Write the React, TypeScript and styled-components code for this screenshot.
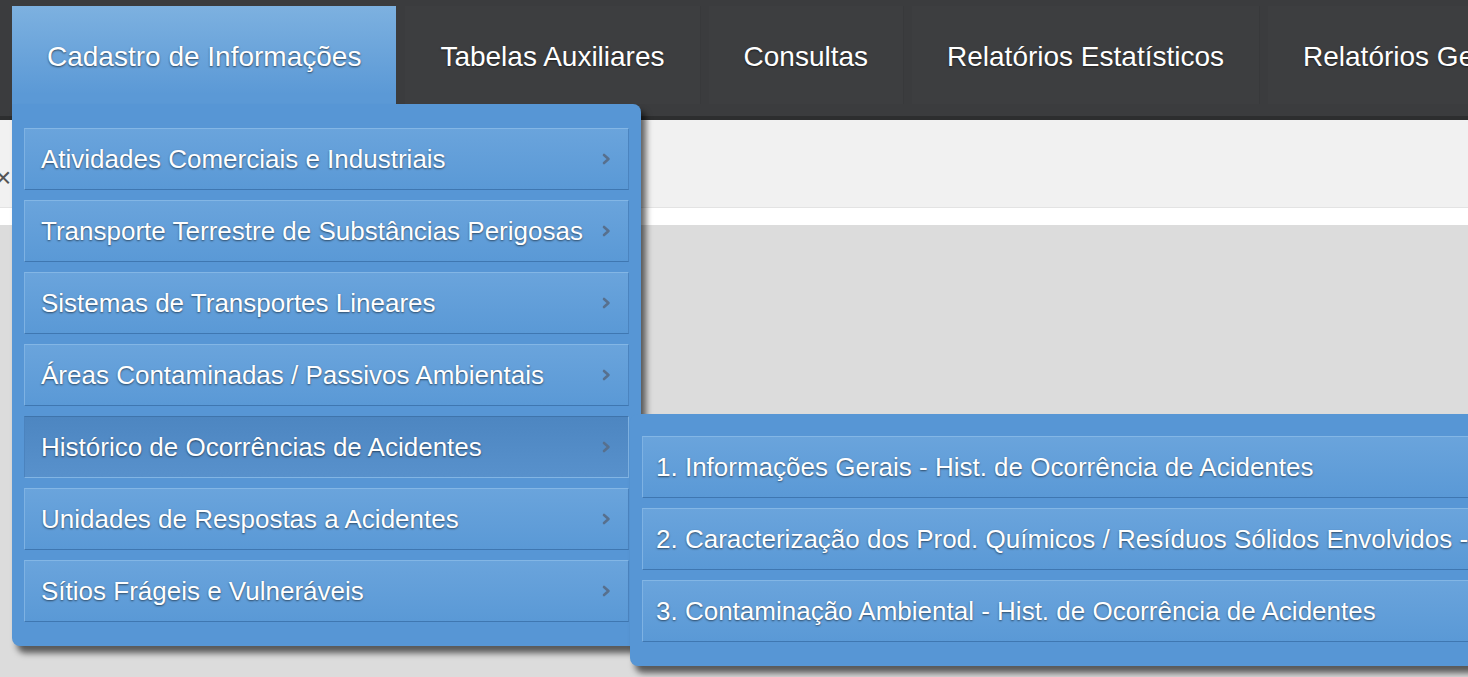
import React from "react";
import styled, { createGlobalStyle, css } from "styled-components";

const GlobalStyle = createGlobalStyle`
  html, body {
    margin: 0;
    padding: 0;
    background: #dcdcdc;
    overflow: hidden;
    font-family: "Liberation Sans", Arial, Helvetica, sans-serif;
  }
  * { box-sizing: border-box; }
`;

const Page = styled.div`
  width: 1468px;
  height: 677px;
  overflow: hidden;
  position: relative;
  background: #dcdcdc;
`;

const Navbar = styled.nav`
  height: 120px;
  background: #3b3c3e;
  border-bottom: 4px solid #2d2e2f;
  display: flex;
  align-items: flex-start;
  padding: 6px 0 0 12px;
  position: relative;
  z-index: 2;
`;

const NavItem = styled.div<{ $active?: boolean }>`
  position: relative;
  flex: none;
  height: 98px;
  margin-right: 8px;
  padding: 3px 35px 0;
  display: flex;
  align-items: center;
  font-size: 28px;
  color: #ffffff;
  white-space: nowrap;
  text-shadow: 0 1px 2px rgba(0, 0, 0, 0.55);
  background: #3d3e40;
  border-right: 1px solid #38393b;
  ${(p) =>
    p.$active &&
    css`
      background: linear-gradient(#7db1e0, #5b99d6 90%);
      border-right: none;
      margin-right: 9px;
      text-shadow: 0 1px 2px rgba(0, 0, 0, 0.6);
    `}
`;

const Toolbar = styled.div`
  height: 88px;
  background: #f1f1f1;
  border-bottom: 1px solid #e3e3e3;
  display: flex;
  align-items: flex-start;
  padding-top: 44px;
`;

const CloseGlyph = styled.span`
  margin-left: -5px;
  font-size: 28px;
  color: #555;
  line-height: 1;
`;

const WhiteBand = styled.div`
  height: 17px;
  background: #ffffff;
`;

const Content = styled.div`
  background: #dcdcdc;
  flex: 1;
`;

const Panel = styled.div`
  position: absolute;
  background: #5796d5;
  border-radius: 8px;
  display: flex;
  flex-direction: column;
  gap: 10px;
  padding: 24px 12px;
  box-shadow: 5px 7px 6px rgba(0, 0, 0, 0.6);
`;

const MainPanel = styled(Panel)`
  top: 98px;
  left: 0;
  width: 629px;
  border-top-left-radius: 0;
`;

const SubPanel = styled(Panel)`
  top: -3px;
  left: calc(100% + 2px);
  padding: 22px 12px 24px;
  z-index: 3;
`;

const MenuItem = styled.div<{ $active?: boolean; $sub?: boolean }>`
  position: relative;
  height: 62px;
  display: flex;
  align-items: center;
  justify-content: space-between;
  padding: 0 17px 0 ${(p) => (p.$sub ? "13px" : "16px")};
  font-size: 26px;
  color: #ffffff;
  white-space: nowrap;
  text-shadow: 0 1px 2px rgba(0, 0, 0, 0.55);
  background: linear-gradient(#6aa4dc, #5a99d6);
  border: 1px solid;
  border-color: #83b6e5 #4b84bf #3f77b1 #7eb2e3;
  ${(p) =>
    p.$active &&
    css`
      background: linear-gradient(#4d86c1, #5891cc);
      border-color: #3f74ab #7fb2e1 #82b5e4 #4b83be;
    `}
`;

const Chevron = styled.svg`
  flex: none;
  width: 9px;
  height: 12px;
  margin-left: 12px;
`;

const Arrow = () => (
  <Chevron viewBox="0 0 9 12">
    <polyline
      points="2,2 6.5,6 2,10"
      fill="none"
      stroke="#57708e"
      strokeWidth="2.6"
      strokeLinecap="round"
      strokeLinejoin="round"
    />
  </Chevron>
);

const mainItems = [
  "Atividades Comerciais e Industriais",
  "Transporte Terrestre de Substâncias Perigosas",
  "Sistemas de Transportes Lineares",
  "Áreas Contaminadas / Passivos Ambientais",
  "Histórico de Ocorrências de Acidentes",
  "Unidades de Respostas a Acidentes",
  "Sítios Frágeis e Vulneráveis",
];

const subItems = [
  "1. Informações Gerais - Hist. de Ocorrência de Acidentes",
  "2. Caracterização dos Prod. Químicos / Resíduos Sólidos Envolvidos - Hist. de Ocorrência de Acidentes",
  "3. Contaminação Ambiental - Hist. de Ocorrência de Acidentes",
];

const navItems = [
  "Tabelas Auxiliares",
  "Consultas",
  "Relatórios Estatísticos",
  "Relatórios Gerenciais",
];

export default function App() {
  return (
    <>
      <GlobalStyle />
      <Page>
        <Navbar>
          <NavItem $active>
            Cadastro de Informações
            <MainPanel>
              {mainItems.map((label, i) => (
                <MenuItem key={label} $active={i === 4}>
                  <span>{label}</span>
                  <Arrow />
                  {i === 4 && (
                    <SubPanel>
                      {subItems.map((s) => (
                        <MenuItem key={s} $sub>
                          <span>{s}</span>
                        </MenuItem>
                      ))}
                    </SubPanel>
                  )}
                </MenuItem>
              ))}
            </MainPanel>
          </NavItem>
          {navItems.map((n) => (
            <NavItem key={n}>{n}</NavItem>
          ))}
        </Navbar>
        <Toolbar>
          <CloseGlyph>×</CloseGlyph>
        </Toolbar>
        <WhiteBand />
        <Content />
      </Page>
    </>
  );
}
